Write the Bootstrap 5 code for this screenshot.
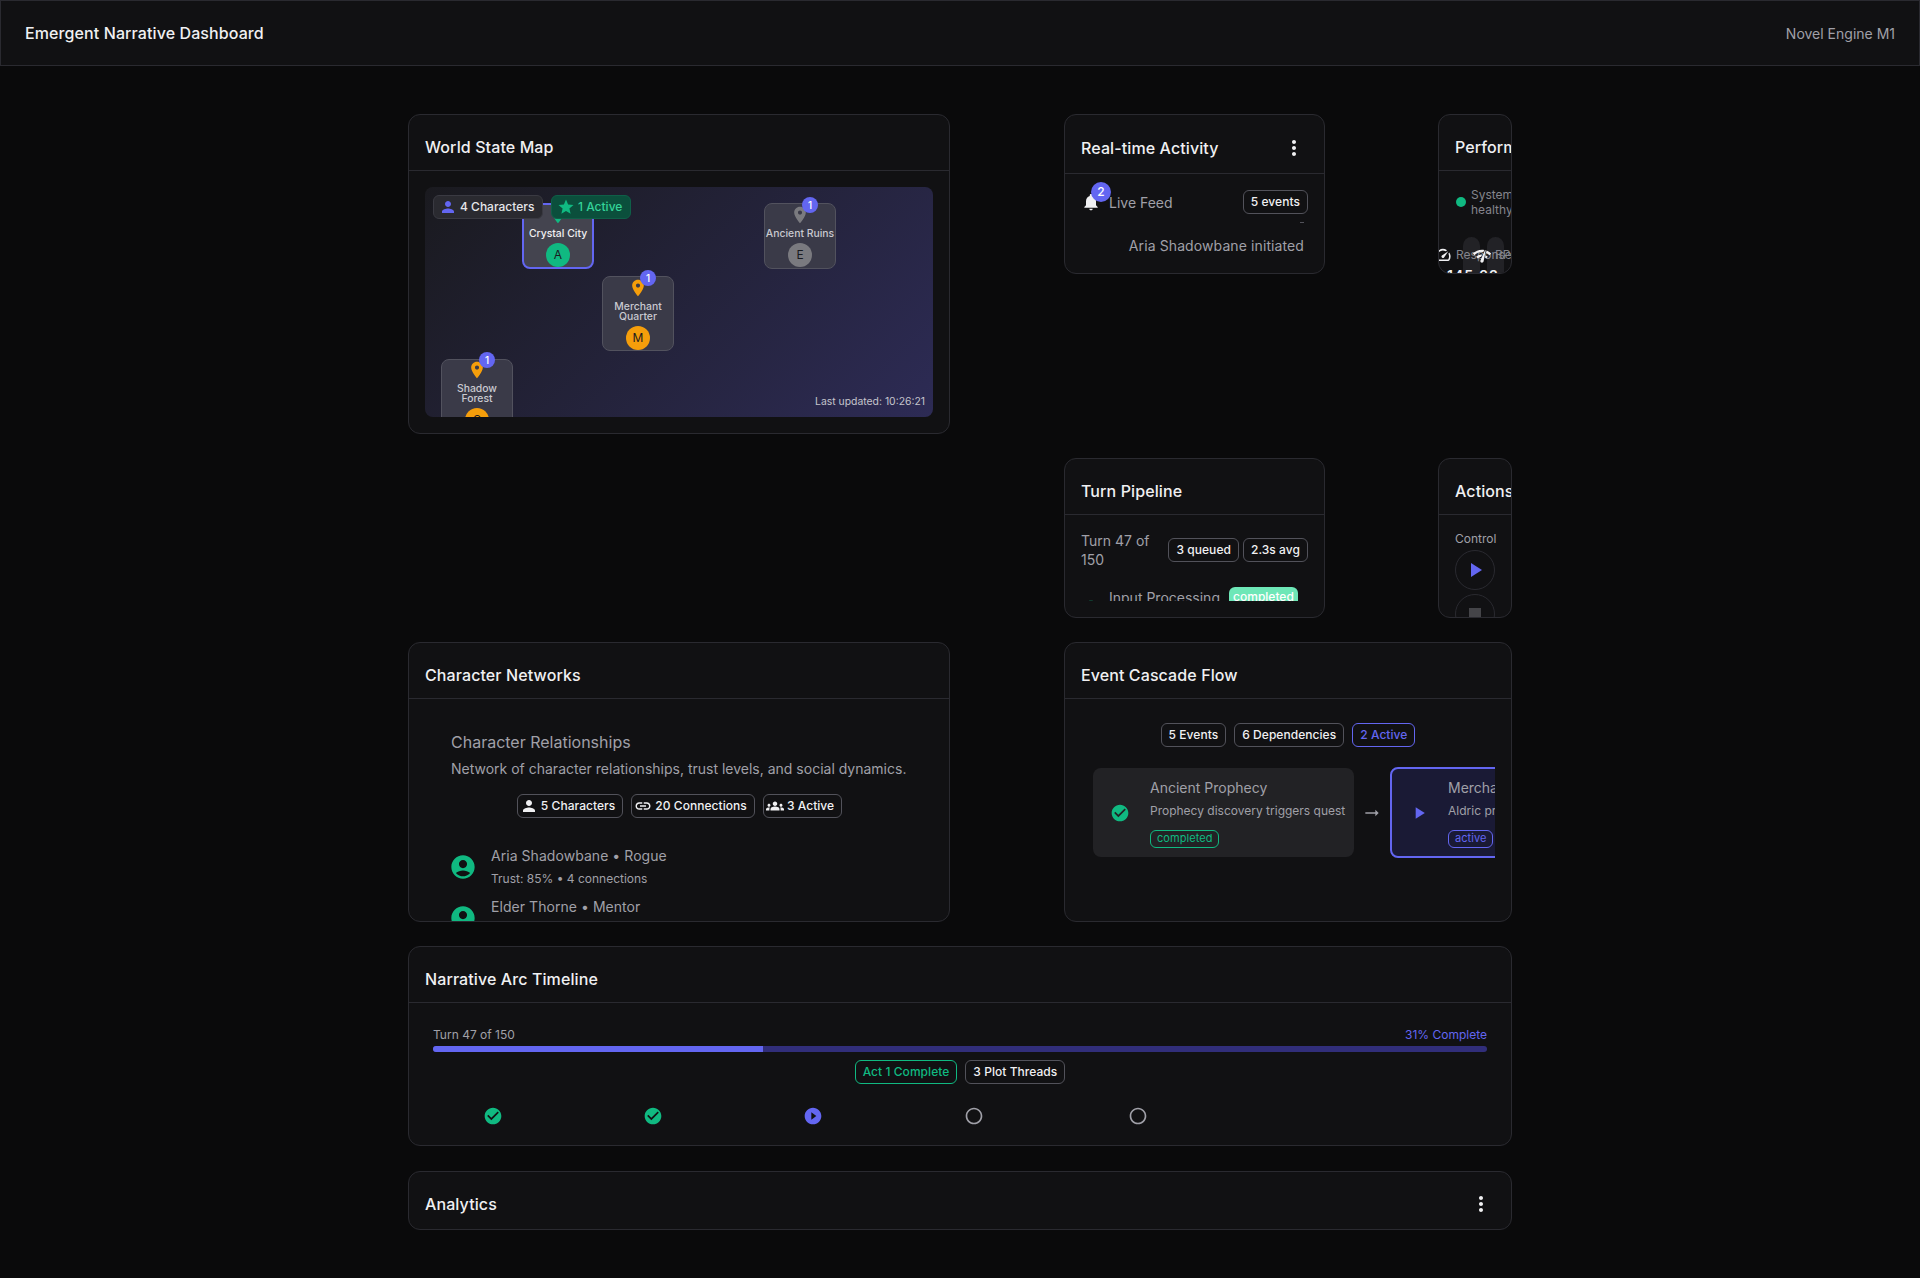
<!DOCTYPE html>
<html lang="en">
<head>
  <meta charset="UTF-8">
  <title>Emergent Narrative Dashboard</title>
  <link href="https://cdn.jsdelivr.net/npm/bootstrap@5.3.0/dist/css/bootstrap.min.css" rel="stylesheet">
  <style>
    body {
      background: #0a0a0b;
      color: #f0f0f2;
      font-family: "Inter", "Liberation Sans", sans-serif;
      min-height: 1278px;
    }
    svg { fill: currentColor; flex-shrink: 0; display: block; }
    .top-bar {
      height: 66px;
      background: #111113;
      border: 1px solid #2a2a30;
      padding: 0 24px;
    }
    .top-title { font-size: 16px; font-weight: 450; letter-spacing: .1px; color: #f0f0f2; }
    .top-sub { font-size: 14px; color: #a0a0a8; }
    .dash-wrap { width: 1104px; margin: 48px auto 0; }
    .dash-grid { display: grid; grid-template-columns: 542px 448px; justify-content: space-between; row-gap: 24.5px; }
    .span-all { grid-column: 1 / -1; }
    .side-stack { height: 504px; margin-bottom: -.5px; }
    .side-row { display: flex; justify-content: space-between; }
    .dash-card {
      background: #111113;
      border: 1px solid #2a2a30;
      border-radius: 12px;
      overflow: hidden;
    }
    .dash-head {
      padding: 8px 16px 0;
      border-bottom: 1px solid #2a2a30;
      height: 56px;
      font-size: 16px;
      font-weight: 450;
      letter-spacing: .1px;
      white-space: nowrap;
      flex-shrink: 0;
    }
    .head-tall { height: 59px; }
    .dash-body { padding: 16px; }
    .chip {
      display: inline-flex;
      align-items: center;
      gap: 4px;
      height: 24px;
      padding: 0 7px;
      border: 1px solid #52525a;
      border-radius: 6px;
      font-size: 12px;
      font-weight: 450;
      letter-spacing: .05px;
      color: #f0f0f2;
      white-space: nowrap;
    }
    .chip-ico { padding-left: 2px; gap: 3px; }
    .chip-blue { border-color: #6366f1; color: #6366f1; }
    .chip-green { border-color: #10b981; color: #10b981; }
    .chip-small { height: 18px; font-size: 11px; font-weight: 400; padding: 0 6px; }
    .txt-dim { color: #a0a0a8; }

    /* world map */
    .map-area {
      position: relative;
      height: 230px;
      border-radius: 8px;
      overflow: hidden;
      background: linear-gradient(135deg, #1a1a1f 0%, #2d2b55 100%);
    }
    .map-node {
      position: absolute;
      width: 72px;
      background: #3a3a48;
      border: 1px solid #52525e;
      border-radius: 8px;
      display: flex;
      flex-direction: column;
      align-items: center;
      padding-top: 1px;
      color: #c9c9d0;
      font-size: 10.4px;
      font-weight: 500;
      line-height: 10px;
      text-align: center;
    }
    .node-sel { border: 2px solid #6366f1; background: #44444f; color: #f0f0f2; padding-top: 0; }
    .node-a { left: 97px; top: 16px; height: 66px; }
    .node-b { left: 339px; top: 16px; height: 66px; }
    .node-c { left: 177px; top: 89px; height: 75px; }
    .node-d { left: 16px; top: 172px; height: 75px; padding-top: 0; }
    .node-d .node-count { top: -8px; }
    .node-name { margin-top: 4px; margin-bottom: 4px; white-space: pre-line; }
    .node-av {
      width: 24px; height: 24px;
      flex-shrink: 0;
      border-radius: 50%;
      display: flex; align-items: center; justify-content: center;
      font-size: 12px; font-weight: 400; line-height: 1;
      color: #1a1a1f;
    }
    .node-count {
      position: absolute; top: -7px; right: 17px;
      width: 16px; height: 16px; border-radius: 50%;
      background: #6366f1; color: #fff;
      font-size: 10px; line-height: 16px; text-align: center;
    }
    .map-chip {
      position: absolute; top: 8px; height: 24px;
      display: flex; align-items: center; gap: 3px;
      padding: 0 8px 0 5px; border-radius: 6px;
      font-size: 12px; font-weight: 450;
      white-space: nowrap;
    }
    .map-chip-a { left: 8px; background: #2a2a30; border: 1px solid #3a3a42; color: #e6e6ea; }
    .map-chip-b { left: 126px; background: #0b4f3c; border: 1px solid #0f5f48; color: #34d399; }
    .map-stamp { position: absolute; right: 8px; bottom: 8px; font-size: 10.4px; font-weight: 400; color: #c4c4cc; line-height: 14px; }

    /* activity */
    .size-act { width: 261px; height: 160px; }
    .size-perf { width: 74px; height: 160px; }
    .bell-wrap { position: relative; width: 20px; height: 20px; }
    .bell-count {
      position: absolute; top: -10px; left: 10px;
      width: 20px; height: 20px; border-radius: 50%;
      background: #6366f1; color: #fff;
      font-size: 12px; font-weight: 500; line-height: 20px; text-align: center;
    }
    .feed-tick { width: 4px; height: 1px; background: #52525a; margin: 8px 4px 0 auto; }
    .feed-msg { font-size: 14px; letter-spacing: .1px; color: #a0a0a8; text-align: right; padding-right: 4px; margin-top: 13px; line-height: 20px; white-space: nowrap; }

    /* perf */
    .perf-body { position: relative; height: 102px; }
    .perf-dot { position: absolute; left: 17px; top: 26px; width: 10px; height: 10px; border-radius: 50%; background: #10b981; }
    .perf-state { position: absolute; left: 32px; top: 16px; font-size: 12px; line-height: 15px; color: #85858d; }
    .perf-pill { position: absolute; top: 66px; width: 17px; height: 60px; border-radius: 9px; background: #222226; }
    .perf-label { position: absolute; top: 76px; font-size: 12px; line-height: 16px; color: #85858d; white-space: nowrap; }
    .perf-value { position: absolute; top: 96px; left: 8px; font-size: 14px; font-weight: 600; letter-spacing: 1px; line-height: 18px; white-space: nowrap; }
    .perf-icon { position: absolute; top: 75px; color: #f0f0f2; }

    /* pipeline */
    .pipe-clip { height: 70px; overflow: hidden; }
    .pipe-turn { font-size: 14px; line-height: 19px; color: #a0a0a8; width: 80px; }
    .pipe-row { margin-top: 18px; }
    .pipe-icon { margin-top: 12px; margin-right: 8px; }
    .pipe-label { font-size: 14px; line-height: 20px; color: #a0a0a8; margin-top: 1px; }
    .pipe-state {
      display: inline-block; height: 20px; margin-left: 9px;
      background: #6ee7b7; color: #fff; border-radius: 6px; font-size: 12px; font-weight: 450; line-height: 20px;
      width: 69px; text-align: center;
    }

    /* actions */
    .act-label { font-size: 12px; color: #a0a0a8; line-height: 16px; margin-bottom: 3px; }
    .act-round {
      width: 40px; height: 40px; border-radius: 50%;
      border: 1px solid #2a2a30; display: flex; align-items: center; justify-content: center;
      margin-bottom: 4px;
    }

    /* characters */
    .size-half { height: 279.5px; }
    .net-body { padding: 31px 16px 0 42px; height: 222px; overflow: hidden; }
    .net-title { font-size: 16px; color: #a0a0a8; line-height: 24px; }
    .net-desc { font-size: 14px; color: #a0a0a8; line-height: 20px; margin-top: 5px; white-space: nowrap; }
    .net-chips { margin: 15px 0 0 -25px; justify-content: center; }
    .net-row { display: flex; gap: 16px; align-items: flex-start; }
    .net-av {
      width: 24px; height: 24px;
      color: #10b981;
      display: flex; align-items: center; justify-content: center;
      margin-top: 9px;
    }
    .net-name { font-size: 14px; letter-spacing: .05px; color: #a0a0a8; line-height: 20px; white-space: nowrap; }
    .net-sub { font-size: 12px; color: #a0a0a8; line-height: 16px; margin-top: 5px; white-space: nowrap; }

    /* cascade */
    .flow-clip { margin: 20px 0 0 12px; display: flex; align-items: center; overflow: hidden; width: 402px; }
    .flow-item {
      flex-shrink: 0; height: 89px; width: 261px;
      background: #222225; border-radius: 8px;
      display: flex; align-items: center;
    }
    .flow-live { background: #1a1a35; border: 2px solid #6366f1; height: 91px; width: 300px; }
    .flow-icon { width: 57px; padding-right: 3px; display: flex; justify-content: center; flex-shrink: 0; }
    .flow-live .flow-icon { width: 56px; }
    .flow-text { display: flex; flex-direction: column; align-items: flex-start; }
    .flow-title { font-size: 14px; color: #a0a0a8; line-height: 20px; white-space: nowrap; }
    .flow-desc { font-size: 12px; color: #a0a0a8; line-height: 16px; margin: 5px 0 11px; white-space: nowrap; }
    .flow-arrow { width: 36px; display: flex; justify-content: center; color: #a0a0a8; flex-shrink: 0; }

    /* timeline */
    .arc-meta { font-size: 12px; line-height: 16px; margin-bottom: 3px; }
    .arc-track { height: 6px; border-radius: 3px; background: #312e7a; overflow: hidden; }
    .arc-fill { height: 100%; background: #6366f1; }
    .arc-steps { display: flex; padding-left: 50px; margin-top: 22px; }
    .arc-step { width: 160.2px; }
    .arc-step-wide { width: 164px; }
    .size-arc { height: 200px; }
    .arc-body { padding: 24px 24px 0 24px; }
    .size-ana { height: 59.5px; }
  </style>
</head>
<body>
  <header class="top-bar d-flex align-items-center justify-content-between">
    <div class="top-title">Emergent Narrative Dashboard</div>
    <div class="top-sub">Novel Engine M1</div>
  </header>

  <main class="dash-wrap">
    <div class="dash-grid">
      <section class="dash-card align-self-start">
        <div class="dash-head d-flex align-items-center">World State Map</div>
        <div class="dash-body">
          <div class="map-area">
            <div class="map-node node-sel node-a">
              <svg width="20" height="20" viewBox="0 0 24 24" color="#10b981"><path d="M12 2C8.13 2 5 5.13 5 9c0 5.25 7 13 7 13s7-7.75 7-13c0-3.87-3.13-7-7-7zm0 9.5c-1.38 0-2.5-1.12-2.5-2.5s1.12-2.5 2.5-2.5 2.5 1.12 2.5 2.5-1.12 2.5-2.5 2.5z"/></svg>
              <div class="node-name">Crystal City</div>
              <div class="node-av" style="background:#10b981">A</div>
            </div>
            <div class="map-node node-b">
              <span class="node-count">1</span>
              <svg width="20" height="20" viewBox="0 0 24 24" color="#7a7a7f"><path d="M12 2C8.13 2 5 5.13 5 9c0 5.25 7 13 7 13s7-7.75 7-13c0-3.87-3.13-7-7-7zm0 9.5c-1.38 0-2.5-1.12-2.5-2.5s1.12-2.5 2.5-2.5 2.5 1.12 2.5 2.5-1.12 2.5-2.5 2.5z"/></svg>
              <div class="node-name">Ancient Ruins</div>
              <div class="node-av" style="background:#7a7a7f">E</div>
            </div>
            <div class="map-node node-c">
              <span class="node-count">1</span>
              <svg width="20" height="20" viewBox="0 0 24 24" color="#f59e0b"><path d="M12 2C8.13 2 5 5.13 5 9c0 5.25 7 13 7 13s7-7.75 7-13c0-3.87-3.13-7-7-7zm0 9.5c-1.38 0-2.5-1.12-2.5-2.5s1.12-2.5 2.5-2.5 2.5 1.12 2.5 2.5-1.12 2.5-2.5 2.5z"/></svg>
              <div class="node-name">Merchant
Quarter</div>
              <div class="node-av" style="background:#f59e0b">M</div>
            </div>
            <div class="map-node node-d">
              <span class="node-count">1</span>
              <svg width="20" height="20" viewBox="0 0 24 24" color="#f59e0b"><path d="M12 2C8.13 2 5 5.13 5 9c0 5.25 7 13 7 13s7-7.75 7-13c0-3.87-3.13-7-7-7zm0 9.5c-1.38 0-2.5-1.12-2.5-2.5s1.12-2.5 2.5-2.5 2.5 1.12 2.5 2.5-1.12 2.5-2.5 2.5z"/></svg>
              <div class="node-name">Shadow
Forest</div>
              <div class="node-av" style="background:#f59e0b">S</div>
            </div>
            <div class="map-chip map-chip-a">
              <svg width="18" height="18" viewBox="0 0 24 24" color="#6366f1"><path d="M12 12c2.21 0 4-1.79 4-4s-1.79-4-4-4-4 1.79-4 4 1.79 4 4 4zm0 2c-2.67 0-8 1.34-8 4v2h16v-2c0-2.66-5.33-4-8-4z"/></svg>
              4 Characters
            </div>
            <div class="map-chip map-chip-b">
              <svg width="18" height="18" viewBox="0 0 24 24" color="#10b981"><path d="M12 17.27 18.18 21l-1.64-6.97L22 9.24l-7.19-.61L12 2 9.19 8.63 2 9.24l5.46 4.73L5.82 21z"/></svg>
              1 Active
            </div>
            <div class="map-stamp">Last updated: 10:26:21</div>
          </div>
        </div>
      </section>

      <div class="side-stack d-flex flex-column justify-content-between">
        <div class="side-row">
          <section class="dash-card size-act">
            <div class="dash-head head-tall d-flex align-items-center justify-content-between">
              Real-time Activity
              <svg width="24" height="24" viewBox="0 0 24 24" style="margin-right:2px"><path d="M12 8c1.1 0 2-.9 2-2s-.9-2-2-2-2 .9-2 2 .9 2 2 2zm0 2c-1.1 0-2 .9-2 2s.9 2 2 2 2-.9 2-2-.9-2-2-2zm0 6c-1.1 0-2 .9-2 2s.9 2 2 2 2-.9 2-2-.9-2-2-2z"/></svg>
            </div>
            <div class="dash-body">
              <div class="d-flex align-items-center justify-content-between">
                <div class="d-flex align-items-center gap-2">
                  <div class="bell-wrap">
                    <svg width="20" height="20" viewBox="0 0 24 24"><path d="M12 22c1.1 0 2-.9 2-2h-4c0 1.1.89 2 2 2zm6-6v-5c0-3.07-1.64-5.64-4.5-6.32V4c0-.83-.67-1.5-1.5-1.5s-1.5.67-1.5 1.5v.68C7.63 5.36 6 7.92 6 11v5l-2 2v1h16v-1l-2-2z"/></svg>
                    <span class="bell-count">2</span>
                  </div>
                  <span class="txt-dim" style="font-size:14px">Live Feed</span>
                </div>
                <span class="chip">5 events</span>
              </div>
              <div class="feed-tick"></div>
              <div class="feed-msg">Aria Shadowbane initiated</div>
            </div>
          </section>

          <section class="dash-card size-perf">
            <div class="dash-head d-flex align-items-center">Performance</div>
            <div class="perf-body">
              <span class="perf-dot"></span>
              <div class="perf-state">System<br>healthy</div>
              <span class="perf-pill" style="left:24px"></span>
              <span class="perf-pill" style="left:48px"></span>
              <svg class="perf-icon" style="left:-5px" width="18" height="18" viewBox="0 0 24 24"><path d="M20.38 8.57l-1.23 1.85a8 8 0 0 1-.22 7.58H5.07A8 8 0 0 1 15.58 6.85l1.85-1.23A10 10 0 0 0 3.35 19a2 2 0 0 0 1.72 1h13.85a2 2 0 0 0 1.74-1 10 10 0 0 0-.27-10.44zm-9.79 6.84a2 2 0 0 0 2.83 0l5.66-8.49-8.49 5.66a2 2 0 0 0 0 2.83z"/></svg>
              <span class="perf-label" style="left:17px">Response</span>
              <svg class="perf-icon" style="left:33px" width="20" height="20" viewBox="0 0 24 24"><path d="M15.9 5c-.17 0-.32.09-.41.23l-.07.15-5.18 11.65c-.16.29-.26.61-.26.96 0 1.11.9 2.01 2.01 2.01.96 0 1.77-.68 1.96-1.59l.01-.03L16.4 5.5c0-.28-.22-.5-.5-.5zM1 9l2 2c2.88-2.88 6.79-4.08 10.53-3.62l1.19-2.68C9.89 3.84 4.74 5.27 1 9zm20 2 2-2c-1.64-1.64-3.55-2.82-5.59-3.57l-.53 2.82c1.5.62 2.9 1.53 4.12 2.75zm-4 4 2-2c-.8-.8-1.7-1.42-2.66-1.89l-.55 2.92c.42.27.83.59 1.21.97zM5 13l2 2c1.13-1.13 2.56-1.79 4.03-2l1.28-2.88c-2.63-.08-5.3.87-7.31 2.88z"/></svg>
              <span class="perf-label" style="left:56px">RPS</span>
              <div class="perf-value">145.23 ms</div>
            </div>
          </section>
        </div>

        <div class="side-row">
          <section class="dash-card size-act">
            <div class="dash-head d-flex align-items-center">Turn Pipeline</div>
            <div class="dash-body">
              <div class="pipe-clip">
                <div class="d-flex align-items-center justify-content-between">
                  <div class="pipe-turn">Turn 47 of 150</div>
                  <div class="d-flex gap-1">
                    <span class="chip">3 queued</span>
                    <span class="chip">2.3s avg</span>
                  </div>
                </div>
                <div class="pipe-row d-flex align-items-start">
                  <svg class="pipe-icon" width="20" height="20" viewBox="0 0 24 24" color="#10b981"><path d="M12 2C6.48 2 2 6.48 2 12s4.48 10 10 10 10-4.48 10-10S17.52 2 12 2zm-2 15-5-5 1.41-1.41L10 14.17l7.59-7.59L19 8l-9 9z"/></svg>
                  <span class="pipe-label">Input Processing</span>
                  <span class="pipe-state">completed</span>
                </div>
              </div>
            </div>
          </section>

          <section class="dash-card size-perf">
            <div class="dash-head d-flex align-items-center">Actions</div>
            <div class="dash-body">
              <div class="act-label">Control</div>
              <div class="act-round">
                <svg width="24" height="24" viewBox="0 0 24 24" color="#6366f1"><path d="M8 5v14l11-7z"/></svg>
              </div>
              <div class="act-round">
                <svg width="24" height="24" viewBox="0 0 24 24" color="#444448"><path d="M6 6h12v12H6z"/></svg>
              </div>
            </div>
          </section>
        </div>
      </div>

      <section class="dash-card size-half">
        <div class="dash-head d-flex align-items-center">Character Networks</div>
        <div class="net-body">
          <div class="net-title">Character Relationships</div>
          <div class="net-desc">Network of character relationships, trust levels, and social dynamics.</div>
          <div class="net-chips d-flex gap-2">
            <span class="chip chip-ico"><svg width="18" height="18" viewBox="0 0 24 24"><path d="M12 12c2.21 0 4-1.79 4-4s-1.79-4-4-4-4 1.79-4 4 1.79 4 4 4zm0 2c-2.67 0-8 1.34-8 4v2h16v-2c0-2.66-5.33-4-8-4z"/></svg>5 Characters</span>
            <span class="chip chip-ico"><svg width="18" height="18" viewBox="0 0 24 24"><path d="M3.9 12c0-1.71 1.39-3.1 3.1-3.1h4V7H7c-2.76 0-5 2.24-5 5s2.24 5 5 5h4v-1.9H7c-1.71 0-3.1-1.39-3.1-3.1zM8 13h8v-2H8v2zm9-6h-4v1.9h4c1.71 0 3.1 1.39 3.1 3.1s-1.39 3.1-3.1 3.1h-4V17h4c2.76 0 5-2.24 5-5s-2.24-5-5-5z"/></svg>20 Connections</span>
            <span class="chip chip-ico"><svg width="18" height="18" viewBox="0 0 24 24"><path d="M12 12.75c1.63 0 3.07.39 4.24.9 1.08.48 1.76 1.56 1.76 2.73V18H6v-1.61c0-1.18.68-2.26 1.76-2.73 1.17-.52 2.61-.91 4.24-.91zM4 13c1.1 0 2-.9 2-2s-.9-2-2-2-2 .9-2 2 .9 2 2 2zm1.13 1.1c-.37-.06-.74-.1-1.13-.1-.99 0-1.93.21-2.78.58C.48 14.9 0 15.62 0 16.43V18h4.5v-1.61c0-.83.23-1.61.63-2.29zM20 13c1.1 0 2-.9 2-2s-.9-2-2-2-2 .9-2 2 .9 2 2 2zm4 3.43c0-.81-.48-1.53-1.22-1.85-.85-.37-1.79-.58-2.78-.58-.39 0-.76.04-1.13.1.4.68.63 1.46.63 2.29V18H24v-1.57zM12 6c1.66 0 3 1.34 3 3s-1.34 3-3 3-3-1.34-3-3 1.34-3 3-3z"/></svg>3 Active</span>
          </div>
          <div class="net-row" style="margin-top:28px">
            <div class="net-av"><svg width="28" height="28" viewBox="0 0 24 24"><path d="M12 2C6.48 2 2 6.48 2 12s4.48 10 10 10 10-4.48 10-10S17.52 2 12 2zm0 4c1.93 0 3.5 1.57 3.5 3.5S13.93 13 12 13s-3.5-1.57-3.5-3.5S10.07 6 12 6zm0 14c-2.03 0-4.43-.82-6.14-2.88C7.55 15.8 9.68 15 12 15s4.45.8 6.14 2.12C16.43 19.18 14.03 20 12 20z"/></svg></div>
            <div>
              <div class="net-name">Aria Shadowbane • Rogue</div>
              <div class="net-sub">Trust: 85% • 4 connections</div>
            </div>
          </div>
          <div class="net-row" style="margin-top:10px">
            <div class="net-av"><svg width="28" height="28" viewBox="0 0 24 24"><path d="M12 2C6.48 2 2 6.48 2 12s4.48 10 10 10 10-4.48 10-10S17.52 2 12 2zm0 4c1.93 0 3.5 1.57 3.5 3.5S13.93 13 12 13s-3.5-1.57-3.5-3.5S10.07 6 12 6zm0 14c-2.03 0-4.43-.82-6.14-2.88C7.55 15.8 9.68 15 12 15s4.45.8 6.14 2.12C16.43 19.18 14.03 20 12 20z"/></svg></div>
            <div>
              <div class="net-name">Elder Thorne • Mentor</div>
              <div class="net-sub">Trust: 92% • 5 connections</div>
            </div>
          </div>
        </div>
      </section>

      <section class="dash-card size-half">
        <div class="dash-head d-flex align-items-center">Event Cascade Flow</div>
        <div class="dash-body" style="padding-top:24px">
          <div class="d-flex justify-content-center gap-2">
            <span class="chip">5 Events</span>
            <span class="chip">6 Dependencies</span>
            <span class="chip chip-blue">2 Active</span>
          </div>
          <div class="flow-clip">
            <div class="flow-item">
              <div class="flow-icon"><svg width="20" height="20" viewBox="0 0 24 24" color="#10b981"><path d="M12 2C6.48 2 2 6.48 2 12s4.48 10 10 10 10-4.48 10-10S17.52 2 12 2zm-2 15-5-5 1.41-1.41L10 14.17l7.59-7.59L19 8l-9 9z"/></svg></div>
              <div class="flow-text">
                <div class="flow-title">Ancient Prophecy</div>
                <div class="flow-desc">Prophecy discovery triggers quest</div>
                <span class="chip chip-green chip-small">completed</span>
              </div>
            </div>
            <div class="flow-arrow"><svg width="20" height="20" viewBox="0 0 24 24"><path d="M16.01 11H4v2h12.01v3L20 12l-3.99-4z"/></svg></div>
            <div class="flow-item flow-live">
              <div class="flow-icon"><svg width="20" height="20" viewBox="0 0 24 24" color="#6366f1"><path d="M8 5v14l11-7z"/></svg></div>
              <div class="flow-text">
                <div class="flow-title">Merchant Alliance</div>
                <div class="flow-desc">Aldric proposes a trade pact</div>
                <span class="chip chip-blue chip-small">active</span>
              </div>
            </div>
          </div>
        </div>
      </section>

      <section class="dash-card size-arc span-all">
        <div class="dash-head d-flex align-items-center">Narrative Arc Timeline</div>
        <div class="arc-body">
          <div class="arc-meta d-flex justify-content-between">
            <span class="txt-dim">Turn 47 of 150</span>
            <span style="color:#6366f1">31% Complete</span>
          </div>
          <div class="arc-track"><div class="arc-fill" style="width:31.3%"></div></div>
          <div class="d-flex justify-content-center gap-2 mt-2">
            <span class="chip chip-green">Act 1 Complete</span>
            <span class="chip">3 Plot Threads</span>
          </div>
          <div class="arc-steps">
            <div class="arc-step"><svg width="20" height="20" viewBox="0 0 24 24" color="#10b981"><path d="M12 2C6.48 2 2 6.48 2 12s4.48 10 10 10 10-4.48 10-10S17.52 2 12 2zm-2 15-5-5 1.41-1.41L10 14.17l7.59-7.59L19 8l-9 9z"/></svg></div>
            <div class="arc-step"><svg width="20" height="20" viewBox="0 0 24 24" color="#10b981"><path d="M12 2C6.48 2 2 6.48 2 12s4.48 10 10 10 10-4.48 10-10S17.52 2 12 2zm-2 15-5-5 1.41-1.41L10 14.17l7.59-7.59L19 8l-9 9z"/></svg></div>
            <div class="arc-step"><svg width="20" height="20" viewBox="0 0 24 24" color="#6366f1"><path d="M12 2C6.48 2 2 6.48 2 12s4.48 10 10 10 10-4.48 10-10S17.52 2 12 2zm-2 14.5v-9l6 4.5-6 4.5z"/></svg></div>
            <div class="arc-step arc-step-wide"><svg width="20" height="20" viewBox="0 0 24 24" color="#a0a0a8"><path d="M12 2C6.48 2 2 6.48 2 12s4.48 10 10 10 10-4.48 10-10S17.52 2 12 2zm0 18c-4.42 0-8-3.58-8-8s3.58-8 8-8 8 3.58 8 8-3.58 8-8 8z"/></svg></div>
            <div class="arc-step"><svg width="20" height="20" viewBox="0 0 24 24" color="#a0a0a8"><path d="M12 2C6.48 2 2 6.48 2 12s4.48 10 10 10 10-4.48 10-10S17.52 2 12 2zm0 18c-4.42 0-8-3.58-8-8s3.58-8 8-8 8 3.58 8 8-3.58 8-8 8z"/></svg></div>
          </div>
        </div>
      </section>

      <section class="dash-card size-ana span-all">
        <div class="dash-head border-0 h-100 d-flex align-items-center justify-content-between">
          Analytics
          <svg width="24" height="24" viewBox="0 0 24 24" style="margin-right:2px"><path d="M12 8c1.1 0 2-.9 2-2s-.9-2-2-2-2 .9-2 2 .9 2 2 2zm0 2c-1.1 0-2 .9-2 2s.9 2 2 2 2-.9 2-2-.9-2-2-2zm0 6c-1.1 0-2 .9-2 2s.9 2 2 2 2-.9 2-2-.9-2-2-2z"/></svg>
        </div>
      </section>
    </div>
  </main>

  <script src="https://cdn.jsdelivr.net/npm/bootstrap@5.3.0/dist/js/bootstrap.bundle.min.js"></script>
</body>
</html>
